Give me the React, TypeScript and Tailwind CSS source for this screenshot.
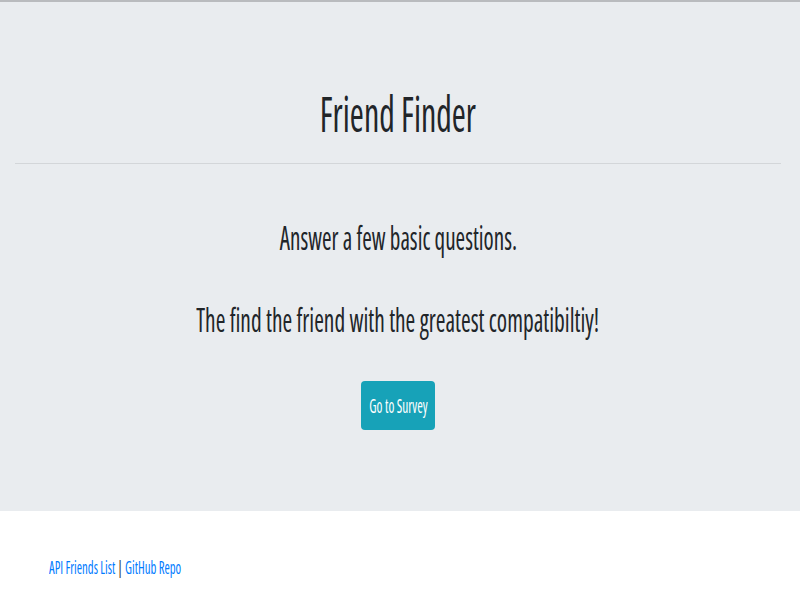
import React from "react";

export default function App() {
  return (
    <div className="min-h-[600px] bg-white font-['Open_Sans',sans-serif] font-stretch-condensed text-[#212529]">
      {/* jumbotron */}
      <section className="h-[511px] bg-[#e9ecef] border-t-2 border-[#b9bbbe] pl-[15px] pr-[19px] flex flex-col items-center">
        <h1 className="mt-[81px] text-[50px] leading-[60px] whitespace-nowrap">
          <span className="inline-block scale-x-[0.68]">Friend Finder</span>
        </h1>
        <hr className="w-full mt-[20px] border-t border-[#d3d6d9]" />
        <p className="mt-[54px] text-[33px] leading-[40px] whitespace-nowrap">
          <span className="inline-block scale-x-[0.7]">Answer a few basic questions.</span>
        </p>
        <p className="mt-[42px] text-[33px] leading-[40px] whitespace-nowrap">
          <span className="inline-block scale-x-[0.71]">The find the friend with the greatest compatibiltiy!</span>
        </p>
        <a
          href="#survey"
          className="mt-[41px] h-[49px] w-[74px] flex items-center justify-center rounded bg-[#17a2b8] text-white text-[20px] whitespace-nowrap"
        >
          <span className="inline-block scale-x-[0.67]">Go to Survey</span>
        </a>
      </section>

      {/* footer links */}
      <footer className="pt-[44px] px-[49px] text-[18px] leading-[24px] whitespace-nowrap">
        <span className="inline-block origin-left scale-x-[0.71]">
          <a href="#api" className="text-[#007bff]">API Friends List</a>
          <span> | </span>
          <a href="#github" className="text-[#007bff]">GitHub Repo</a>
        </span>
      </footer>
    </div>
  );
}
